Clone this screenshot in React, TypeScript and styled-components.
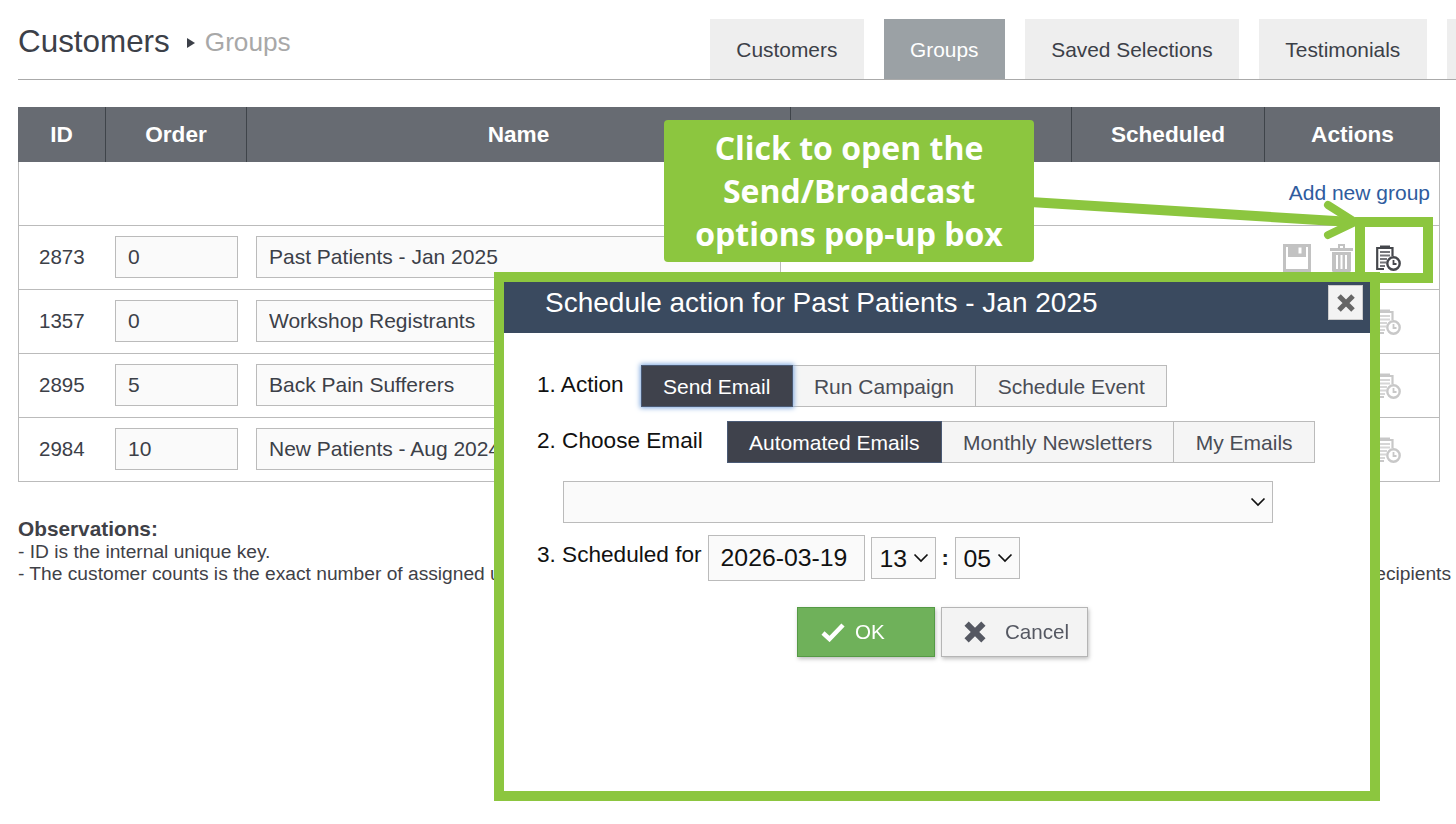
import styled, { createGlobalStyle } from 'styled-components';

const GREEN = '#8cc63f';

const chevron = (size: number) =>
    `url("data:image/svg+xml,%3Csvg xmlns='http://www.w3.org/2000/svg' width='${size}' height='${size}' viewBox='0 0 16 16' fill='none'%3E%3Cpath d='M1.5 4.5L8 11l6.5-6.5' stroke='%23111' stroke-width='1.7'/%3E%3C/svg%3E")`;

const GlobalStyle = createGlobalStyle`
    html, body {
        margin: 0;
        padding: 0;
        background: #fff;
        overflow: hidden;
    }
    body {
        font-family: "Liberation Sans", Arial, sans-serif;
        color: #3c4048;
    }
    * {
        box-sizing: border-box;
    }
`;

const Page = styled.div`
    position: relative;
    width: 1456px;
    height: 824px;
    padding: 19px 0 0 18px;
    overflow: hidden;
`;

const TopBar = styled.div`
    display: flex;
    justify-content: space-between;
    height: 61px;
    border-bottom: 1px solid #aaa;
`;

const Crumbs = styled.div`
    display: flex;
    align-items: center;
    height: 46px;
`;

const PageTitle = styled.h1`
    margin: 0;
    font-size: 31.4px;
    font-weight: 400;
    color: #3c4048;
`;

const CrumbArrow = styled.span`
    width: 0;
    height: 0;
    margin: 2px 10px 0 17px;
    border-left: 8px solid #3c4048;
    border-top: 5px solid transparent;
    border-bottom: 5px solid transparent;
`;

const SubTitle = styled.span`
    font-size: 26.2px;
    color: #a8a8a8;
`;

const Tabs = styled.div`
    display: flex;
    gap: 20px;
    margin-left: auto;
    width: 746px;
    flex: none;
    overflow: hidden;
`;

const Tab = styled.div<{ $active?: boolean }>`
    flex: none;
    height: 60px;
    padding: 2px 26.35px 0;
    display: flex;
    align-items: center;
    font-size: 20.9px;
    background: ${props => (props.$active ? '#9ba1a5' : '#eeeeee')};
    color: ${props => (props.$active ? '#fff' : '#3c4048')};
`;

const BlankTab = styled(Tab)`
    width: 60px;
`;

const GroupTable = styled.table`
    width: 1422px;
    margin-top: 27px;
    border-collapse: separate;
    border-spacing: 0;
    table-layout: fixed;
`;

const HeadCell = styled.th`
    height: 55px;
    padding: 0;
    background: #676b72;
    color: #fff;
    font-size: 22.6px;
    font-weight: 700;
    text-align: center;
    border-right: 1px solid #3f444a;
    &:last-child {
        border-right: none;
    }
`;

const Cell = styled.td`
    height: 64px;
    padding: 0 9px 1px;
    font-size: 20.5px;
    color: #3c4048;
    border-bottom: 1px solid #bbb;
    &:first-child {
        padding-left: 20px;
        border-left: 1px solid #bbb;
    }
    &:last-child {
        border-right: 1px solid #bbb;
    }
`;

const AddRow = styled.td`
    height: 64px;
    padding: 0 9px 0 0;
    text-align: right;
    border: 1px solid #bbb;
    border-width: 0 1px 1px 1px;
`;

const AddLink = styled.a`
    font-size: 21px;
    color: #2f5c9e;
    position: relative;
    top: -1px;
`;

const TextInput = styled.input<{ $wide?: boolean }>`
    display: block;
    width: ${props => (props.$wide ? '525px' : '123px')};
    height: 42px;
    padding: 0 12px;
    background: #fafafa;
    border: 1px solid #bbb;
    font: 21px "Liberation Sans", Arial, sans-serif;
    color: #3c4048;
    outline: none;
`;

const RowIcons = styled.div`
    display: flex;
    align-items: center;
    justify-content: flex-end;
    padding-right: 29px;
    gap: 18.5px;
    position: relative;
    top: 1px;
    color: #c2c2c2;
    filter: blur(0.3px);
`;

const ScheduleIcon = styled.span<{ $active?: boolean }>`
    display: flex;
    margin-left: 5px;
    color: ${props => (props.$active ? '#45474c' : '#c8c8c8')};
`;

const Notes = styled.div`
    margin-top: 36px;
    width: 1433px;
    font-size: 19.2px;
    line-height: 22px;
    color: #3f4147;
`;

const NotesTitle = styled.div`
    margin-bottom: 1px;
    font-size: 20.8px;
    font-weight: 700;
    line-height: 22px;
`;

const NoteLine = styled.div`
    display: flex;
    justify-content: space-between;
    white-space: nowrap;
`;

const Callout = styled.div`
    position: absolute;
    left: 664px;
    top: 120px;
    width: 370px;
    height: 142px;
    padding-top: 6px;
    border-radius: 4px;
    background: ${GREEN};
    color: #fff;
    font-family: "Open Sans", sans-serif;
    font-size: 32px;
    font-weight: 700;
    line-height: 43px;
    text-align: center;
`;

const ArrowLayer = styled.svg`
    position: absolute;
    left: 1030px;
    top: 190px;
`;

const Highlight = styled.div`
    position: absolute;
    left: 1355px;
    top: 217px;
    width: 78px;
    height: 66px;
    border: 10px solid ${GREEN};
`;

const Modal = styled.div`
    position: absolute;
    left: 494px;
    top: 272px;
    width: 886px;
    height: 529px;
    border: 10px solid ${GREEN};
    background: #fff;
`;

const ModalHead = styled.div`
    height: 51px;
    padding: 3px 7px 0 41px;
    display: flex;
    justify-content: space-between;
    align-items: flex-start;
    background: #3a4a5f;
`;

const ModalTitle = styled.div`
    margin-top: 2px;
    font-size: 28px;
    color: #fff;
`;

const CloseBox = styled.button`
    width: 35px;
    height: 35px;
    padding: 0;
    display: flex;
    align-items: center;
    justify-content: center;
    background: #f3f3f3;
    border: 1px solid #ccc;
    color: #666;
    filter: blur(0.3px);
`;

const ModalBody = styled.div`
    padding: 32px 0 0 33px;
    color: #111;
`;

const FormRow = styled.div<{ $top?: number }>`
    display: flex;
    align-items: center;
    margin-top: ${props => props.$top ?? 0}px;
`;

const FieldLabel = styled.span<{ $gap: number; $lift: number }>`
    margin-right: ${props => props.$gap}px;
    margin-bottom: ${props => props.$lift}px;
    font-size: 22.6px;
    color: #111;
    white-space: nowrap;
`;

const SegmentGroup = styled.div`
    display: flex;
`;

const Segment = styled.button<{ $active?: boolean; $focus?: boolean }>`
    height: 42px;
    padding: 1px 21.3px 0;
    margin-right: -1px;
    font: 21px "Liberation Sans", Arial, sans-serif;
    background: ${props => (props.$active ? '#3f424c' : '#f5f5f5')};
    color: ${props => (props.$active ? '#fff' : '#4a4d55')};
    border: 1px solid ${props => (props.$active ? '#4a5a75' : '#bbb')};
    box-shadow: ${props => (props.$focus ? '0 0 5px 1px #7da7de' : 'none')};
    position: relative;
    z-index: ${props => (props.$active ? 1 : 0)};
`;

const WideSelect = styled.select`
    display: block;
    width: 710px;
    height: 42px;
    margin: 18px 0 0 26px;
    appearance: none;
    background: #fafafa ${chevron(16)} no-repeat right 6px center;
    border: 1px solid #bbb;
    border-radius: 0;
    outline: none;
`;

const DateInput = styled.input`
    width: 157px;
    height: 46px;
    padding: 0 12px;
    background: #fafafa;
    border: 1px solid #bbb;
    font: 24.8px "Liberation Sans", Arial, sans-serif;
    color: #111;
    outline: none;
`;

const TimeSelect = styled.select<{ $left: number }>`
    width: 65px;
    height: 42px;
    margin-left: ${props => props.$left}px;
    padding: 0 0 0 8px;
    appearance: none;
    background: #fafafa ${chevron(16)} no-repeat right 6px center;
    border: 1px solid #bbb;
    border-radius: 0;
    font: 24.8px "Liberation Sans", Arial, sans-serif;
    color: #111;
    outline: none;
`;

const TimeColon = styled.span`
    width: 19px;
    text-align: center;
    font-size: 22px;
    font-weight: 700;
    color: #222;
`;

const ButtonRow = styled.div`
    display: flex;
    gap: 6px;
    margin: 26px 0 0 260px;
`;

const ActionButton = styled.button<{ $ok?: boolean }>`
    display: flex;
    align-items: center;
    height: 50px;
    width: ${props => (props.$ok ? '138px' : '147px')};
    padding: 0 0 0 ${props => (props.$ok ? '23px' : '21px')};
    gap: ${props => (props.$ok ? '10px' : '18px')};
    font: 20.6px "Liberation Sans", Arial, sans-serif;
    background: ${props => (props.$ok ? '#6fb15a' : '#f3f3f3')};
    color: ${props => (props.$ok ? '#fff' : '#555862')};
    border: 1px solid ${props => (props.$ok ? '#559a45' : '#b5b5b5')};
    box-shadow: 1px 2px 4px rgba(0, 0, 0, 0.25);
    filter: blur(0.4px);
`;

const SaveIcon = () => (
    <svg width="28" height="28" viewBox="0 0 28 28" fill="none">
        <path d="M1.5 1.5h25v25h-25z" stroke="currentColor" strokeWidth="3" />
        <path d="M5 2h18v11H5z" fill="currentColor" />
        <path d="M15.5 3.5h3v6h-3z" fill="#fff" />
    </svg>
);

const TrashIcon = () => (
    <svg width="23" height="28" viewBox="0 0 23 28" fill="none">
        <path d="M0 4h23v3H0zM8 0h7v4h-2V2H10v2H8z" fill="currentColor" />
        <path d="M2 8h19v18.5a1.5 1.5 0 0 1-1.5 1.5h-16A1.5 1.5 0 0 1 2 26.5z" fill="currentColor" />
        <path d="M6 11h2v14H6zM10.5 11h2v14h-2zM15 11h2v14h-2z" fill="#fff" />
    </svg>
);

const ClipboardClock = () => (
    <svg width="25" height="26" viewBox="0 0 25 26" fill="none">
        <path d="M4 0.5h10v3H4z" fill="currentColor" />
        <path d="M16.5 11V3H1.2v21H8" stroke="currentColor" strokeWidth="2.2" />
        <path d="M4 7h10M4 10.5h10M4 14h7M4 17.5h6M4 21h5" stroke="currentColor" strokeWidth="1.8" opacity="0.75" />
        <circle cx="17.5" cy="18.5" r="6.2" fill="#fff" stroke="currentColor" strokeWidth="2.4" />
        <path d="M17.5 15v4h3" stroke="currentColor" strokeWidth="1.8" />
    </svg>
);

const CrossIcon = ({ size }: { size: number }) => (
    <svg width={size} height={size} viewBox="0 0 20 20" fill="none">
        <path d="M3 3l14 14M17 3L3 17" stroke="currentColor" strokeWidth="5" />
    </svg>
);

const CheckIcon = () => (
    <svg width="24" height="20" viewBox="0 0 24 20" fill="none">
        <path d="M2 11l6.5 6L22 3" stroke="#fff" strokeWidth="4.5" />
    </svg>
);

const groups = [
    { id: 2873, order: 0, name: 'Past Patients - Jan 2025', active: true },
    { id: 1357, order: 0, name: 'Workshop Registrants', active: false },
    { id: 2895, order: 5, name: 'Back Pain Sufferers', active: false },
    { id: 2984, order: 10, name: 'New Patients - Aug 2024', active: false },
];

const columns = [88, 141, 544, 281, 193, 175];

export default function App() {
    return (
        <Page>
            <GlobalStyle />
            <TopBar>
                <Crumbs>
                    <PageTitle>Customers</PageTitle>
                    <CrumbArrow />
                    <SubTitle>Groups</SubTitle>
                </Crumbs>
                <Tabs>
                    <Tab>Customers</Tab>
                    <Tab $active>Groups</Tab>
                    <Tab>Saved Selections</Tab>
                    <Tab>Testimonials</Tab>
                    <BlankTab />
                </Tabs>
            </TopBar>

            <GroupTable>
                <colgroup>
                    {columns.map((width, i) => (
                        <col key={i} width={width} />
                    ))}
                </colgroup>
                <thead>
                    <tr>
                        <HeadCell>ID</HeadCell>
                        <HeadCell>Order</HeadCell>
                        <HeadCell>Name</HeadCell>
                        <HeadCell />
                        <HeadCell>Scheduled</HeadCell>
                        <HeadCell>Actions</HeadCell>
                    </tr>
                </thead>
                <tbody>
                    <tr>
                        <AddRow colSpan={6}>
                            <AddLink>Add new group</AddLink>
                        </AddRow>
                    </tr>
                    {groups.map(group => (
                        <tr key={group.id}>
                            <Cell>{group.id}</Cell>
                            <Cell>
                                <TextInput defaultValue={group.order} />
                            </Cell>
                            <Cell>
                                <TextInput $wide defaultValue={group.name} />
                            </Cell>
                            <Cell />
                            <Cell />
                            <Cell>
                                <RowIcons>
                                    <SaveIcon />
                                    <TrashIcon />
                                    <ScheduleIcon $active={group.active}>
                                        <ClipboardClock />
                                    </ScheduleIcon>
                                </RowIcons>
                            </Cell>
                        </tr>
                    ))}
                </tbody>
            </GroupTable>

            <Notes>
                <NotesTitle>Observations:</NotesTitle>
                <div>- ID is the internal unique key.</div>
                <NoteLine>
                    <span>- The customer counts is the exact number of assigned users</span>
                    <span>recipients</span>
                </NoteLine>
            </Notes>

            <Callout>
                Click to open the
                <br />
                Send/Broadcast
                <br />
                options pop-up box
            </Callout>

            <ArrowLayer width="340" height="60" viewBox="0 0 340 60" fill="none">
                <path d="M0 12L322 32" stroke={GREEN} strokeWidth="10" />
                <path d="M298 15L325 32L298 45" stroke={GREEN} strokeWidth="8" strokeLinecap="round" />
            </ArrowLayer>

            <Highlight />

            <Modal>
                <ModalHead>
                    <ModalTitle>Schedule action for Past Patients - Jan 2025</ModalTitle>
                    <CloseBox>
                        <CrossIcon size={20} />
                    </CloseBox>
                </ModalHead>
                <ModalBody>
                    <FormRow>
                        <FieldLabel $gap={17} $lift={3}>
                            1. Action
                        </FieldLabel>
                        <SegmentGroup>
                            <Segment $active $focus>
                                Send Email
                            </Segment>
                            <Segment>Run Campaign</Segment>
                            <Segment>Schedule Event</Segment>
                        </SegmentGroup>
                    </FormRow>
                    <FormRow $top={14}>
                        <FieldLabel $gap={24} $lift={3}>
                            2. Choose Email
                        </FieldLabel>
                        <SegmentGroup>
                            <Segment $active>Automated Emails</Segment>
                            <Segment>Monthly Newsletters</Segment>
                            <Segment>My Emails</Segment>
                        </SegmentGroup>
                    </FormRow>
                    <WideSelect />
                    <FormRow $top={12}>
                        <FieldLabel $gap={6} $lift={6}>
                            3. Scheduled for
                        </FieldLabel>
                        <DateInput defaultValue="2026-03-19" />
                        <TimeSelect $left={6} defaultValue="13">
                            <option>13</option>
                        </TimeSelect>
                        <TimeColon>:</TimeColon>
                        <TimeSelect $left={0} defaultValue="05">
                            <option>05</option>
                        </TimeSelect>
                    </FormRow>
                    <ButtonRow>
                        <ActionButton $ok>
                            <CheckIcon />
                            OK
                        </ActionButton>
                        <ActionButton>
                            <CrossIcon size={24} />
                            Cancel
                        </ActionButton>
                    </ButtonRow>
                </ModalBody>
            </Modal>
        </Page>
    );
}
